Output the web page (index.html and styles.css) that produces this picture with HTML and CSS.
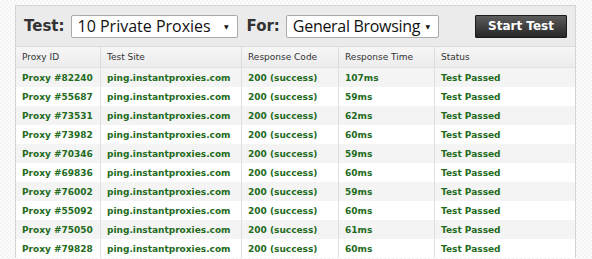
FILE: index.html
```html
<!DOCTYPE html>
<html lang="en">
<head>
    <meta charset="UTF-8">
    <title>Proxy Test</title>
    <link rel="stylesheet" href="styles.css">
</head>
<body>
    <div class="panel">
        <div class="toolbar">
            <span class="label">Test:</span>
            <div class="select select-test">10 Private Proxies <span class="arrow">&#9660;</span></div>
            <span class="label">For:</span>
            <div class="select select-for">General Browsing <span class="arrow">&#9660;</span></div>
            <button class="start">Start Test</button>
        </div>

        <table class="results">
            <thead>
                <tr>
                    <th class="c-id">Proxy ID</th>
                    <th class="c-site">Test Site</th>
                    <th class="c-code">Response Code</th>
                    <th class="c-time">Response Time</th>
                    <th>Status</th>
                </tr>
            </thead>
            <tbody>
                <tr><td>Proxy #82240</td><td>ping.instantproxies.com</td><td>200 (success)</td><td>107ms</td><td>Test Passed</td></tr>
                <tr><td>Proxy #55687</td><td>ping.instantproxies.com</td><td>200 (success)</td><td>59ms</td><td>Test Passed</td></tr>
                <tr><td>Proxy #73531</td><td>ping.instantproxies.com</td><td>200 (success)</td><td>62ms</td><td>Test Passed</td></tr>
                <tr><td>Proxy #73982</td><td>ping.instantproxies.com</td><td>200 (success)</td><td>60ms</td><td>Test Passed</td></tr>
                <tr><td>Proxy #70346</td><td>ping.instantproxies.com</td><td>200 (success)</td><td>59ms</td><td>Test Passed</td></tr>
                <tr><td>Proxy #69836</td><td>ping.instantproxies.com</td><td>200 (success)</td><td>60ms</td><td>Test Passed</td></tr>
                <tr><td>Proxy #76002</td><td>ping.instantproxies.com</td><td>200 (success)</td><td>59ms</td><td>Test Passed</td></tr>
                <tr><td>Proxy #55092</td><td>ping.instantproxies.com</td><td>200 (success)</td><td>60ms</td><td>Test Passed</td></tr>
                <tr><td>Proxy #75050</td><td>ping.instantproxies.com</td><td>200 (success)</td><td>61ms</td><td>Test Passed</td></tr>
                <tr><td>Proxy #79828</td><td>ping.instantproxies.com</td><td>200 (success)</td><td>60ms</td><td>Test Passed</td></tr>
            </tbody>
        </table>
    </div>
</body>
</html>
```

FILE: styles.css
```css
body {
    margin: 0;
    padding: 5px 0 0 15px;
    font-family: "DejaVu Sans", Verdana, sans-serif;
    background-color: #fbfbfb;
    background-image: repeating-conic-gradient(#f3f3f3 0 25%, #fdfdfd 0 50%);
    background-size: 4px 4px;
    overflow: hidden;
}

.panel {
    width: 559px;
    border: 1px solid #d4d4d4;
    border-bottom: none;
    background-color: #fff;
}

.toolbar {
    display: flex;
    align-items: center;
    height: 40px;
    padding-left: 8px;
    background-color: #ebebeb;
    border-bottom: 1px solid #dcdcdc;
}

.label {
    font-size: 15px;
    font-weight: bold;
    color: #333;
    margin-right: 6px;
}

.select {
    position: relative;
    box-sizing: border-box;
    height: 23px;
    line-height: 21px;
    padding-left: 6px;
    font-family: "Open Sans", sans-serif;
    font-size: 16px;
    color: #111;
    background-color: #fff;
    border: 1px solid #a9a9a9;
    border-radius: 2px;
}

.select-test {
    width: 167px;
    margin-right: 9px;
}

.select-for {
    width: 153px;
    letter-spacing: -0.3px;
}

.arrow {
    position: absolute;
    right: 8px;
    top: 0;
    font-family: "DejaVu Sans", sans-serif;
    font-size: 6px;
}

.start {
    margin-left: auto;
    margin-right: 8px;
    width: 92px;
    height: 23px;
    padding: 0;
    font-family: inherit;
    font-size: 12px;
    font-weight: bold;
    color: #fff;
    background: linear-gradient(#5c5c5c, #262626);
    border: 1px solid #1a1a1a;
    border-radius: 1px;
}

.results {
    width: 100%;
    border-collapse: collapse;
    font-size: 9px;
}

.results th {
    height: 20px;
    padding: 0 6px;
    text-align: left;
    font-weight: normal;
    color: #333;
    background: linear-gradient(#f6f6f6, #ececec);
    border-left: 1px solid #dcdcdc;
    border-bottom: 1px solid #e2e2e2;
}

.results td {
    height: 19px;
    padding: 0 6px;
    font-weight: bold;
    color: #236b1c;
    border-left: 1px solid #e0e0e0;
}

.results th:first-child,
.results td:first-child {
    border-left: none;
}

.results tbody tr:nth-child(odd) {
    background-color: #f4f4f4;
}

.c-id { width: 72px; }
.c-site { width: 128px; }
.c-code { width: 84px; }
.c-time { width: 83px; }
```
